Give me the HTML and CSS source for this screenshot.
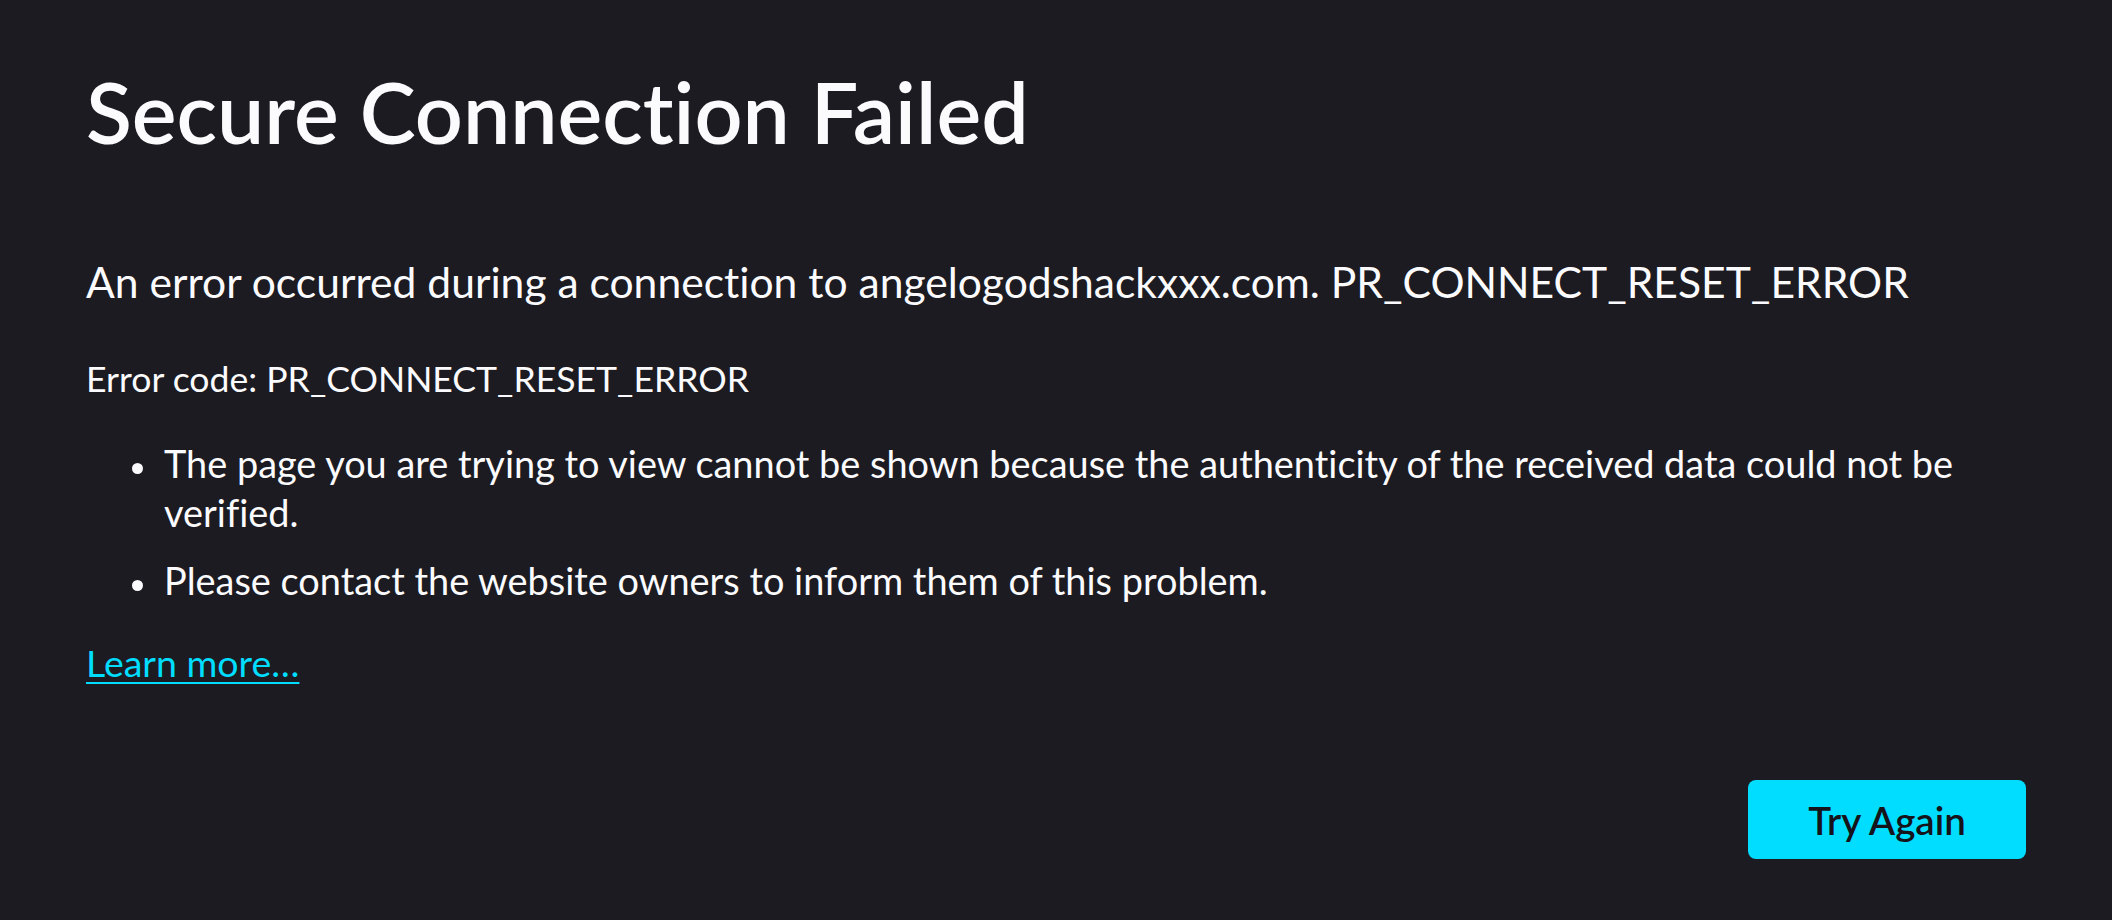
FILE: index.html
```html
<!DOCTYPE html>
<html lang="en">
<head>
<meta charset="utf-8">
<title>Secure Connection Failed</title>
<link rel="stylesheet" href="styles.css">
</head>
<body>
  <main class="container">
    <h1 class="title">Secure Connection Failed</h1>
    <p class="short-desc">An error occurred during a connection to angelogodshackxxx.com. PR_CONNECT_RESET_ERROR</p>
    <p class="error-code">Error code: PR_CONNECT_RESET_ERROR</p>
    <ul class="details">
      <li class="detail">The page you are trying to view cannot be shown because the authenticity of the received data could not be verified.</li>
      <li class="detail">Please contact the website owners to inform them of this problem.</li>
    </ul>
    <p class="learn"><a class="learn-link" href="#">Learn more…</a></p>
    <div class="actions">
      <button class="primary-btn" type="button">Try Again</button>
    </div>
  </main>
</body>
</html>
```
FILE: styles.css
```css
html, body {
  margin: 0;
  padding: 0;
  background: #1c1b22;
}

body {
  color: #fbfbfe;
  font-family: "Lato", "Noto Sans", sans-serif;
  font-size: 37.9px;
  font-variant-ligatures: none;
  height: 920px;
  overflow: hidden;
}

.container {
  width: 1940px;
  margin: 0 auto;
  padding-top: 62px;
}

.title {
  margin: 0;
  font-size: 84.3px;
  font-weight: 600;
  line-height: 99px;
}

.short-desc {
  margin: 94px 0 0;
  font-size: 42.6px;
  line-height: 54.6px;
}

.error-code {
  margin: 46px 0 0;
  font-size: 35.6px;
  line-height: 46.8px;
}

.details {
  list-style: none;
  margin: 37px 0 0;
  padding: 0 0 0 78px;
}

.detail {
  position: relative;
  line-height: 49px;
  margin: 0;
}

.detail + .detail {
  margin-top: 19px;
}

.detail::before {
  content: "";
  position: absolute;
  left: -32px;
  top: 24px;
  width: 11px;
  height: 11px;
  border-radius: 50%;
  background: #fbfbfe;
}

.learn {
  margin: 33px 0 0;
  font-size: 37.5px;
  line-height: 49px;
}

.learn-link {
  color: #00ddff;
  text-decoration: underline;
  text-decoration-thickness: 2px;
  text-underline-offset: 5px;
}

.actions {
  display: flex;
  justify-content: flex-end;
  margin-top: 93px;
}

.primary-btn {
  width: 278px;
  height: 79px;
  border: none;
  border-radius: 8px;
  background: #00ddff;
  color: #15141a;
  font-family: "Lato", "Noto Sans", sans-serif;
  font-variant-ligatures: none;
  font-size: 38.5px;
  font-weight: 600;
  padding: 0;
  cursor: pointer;
}
```
